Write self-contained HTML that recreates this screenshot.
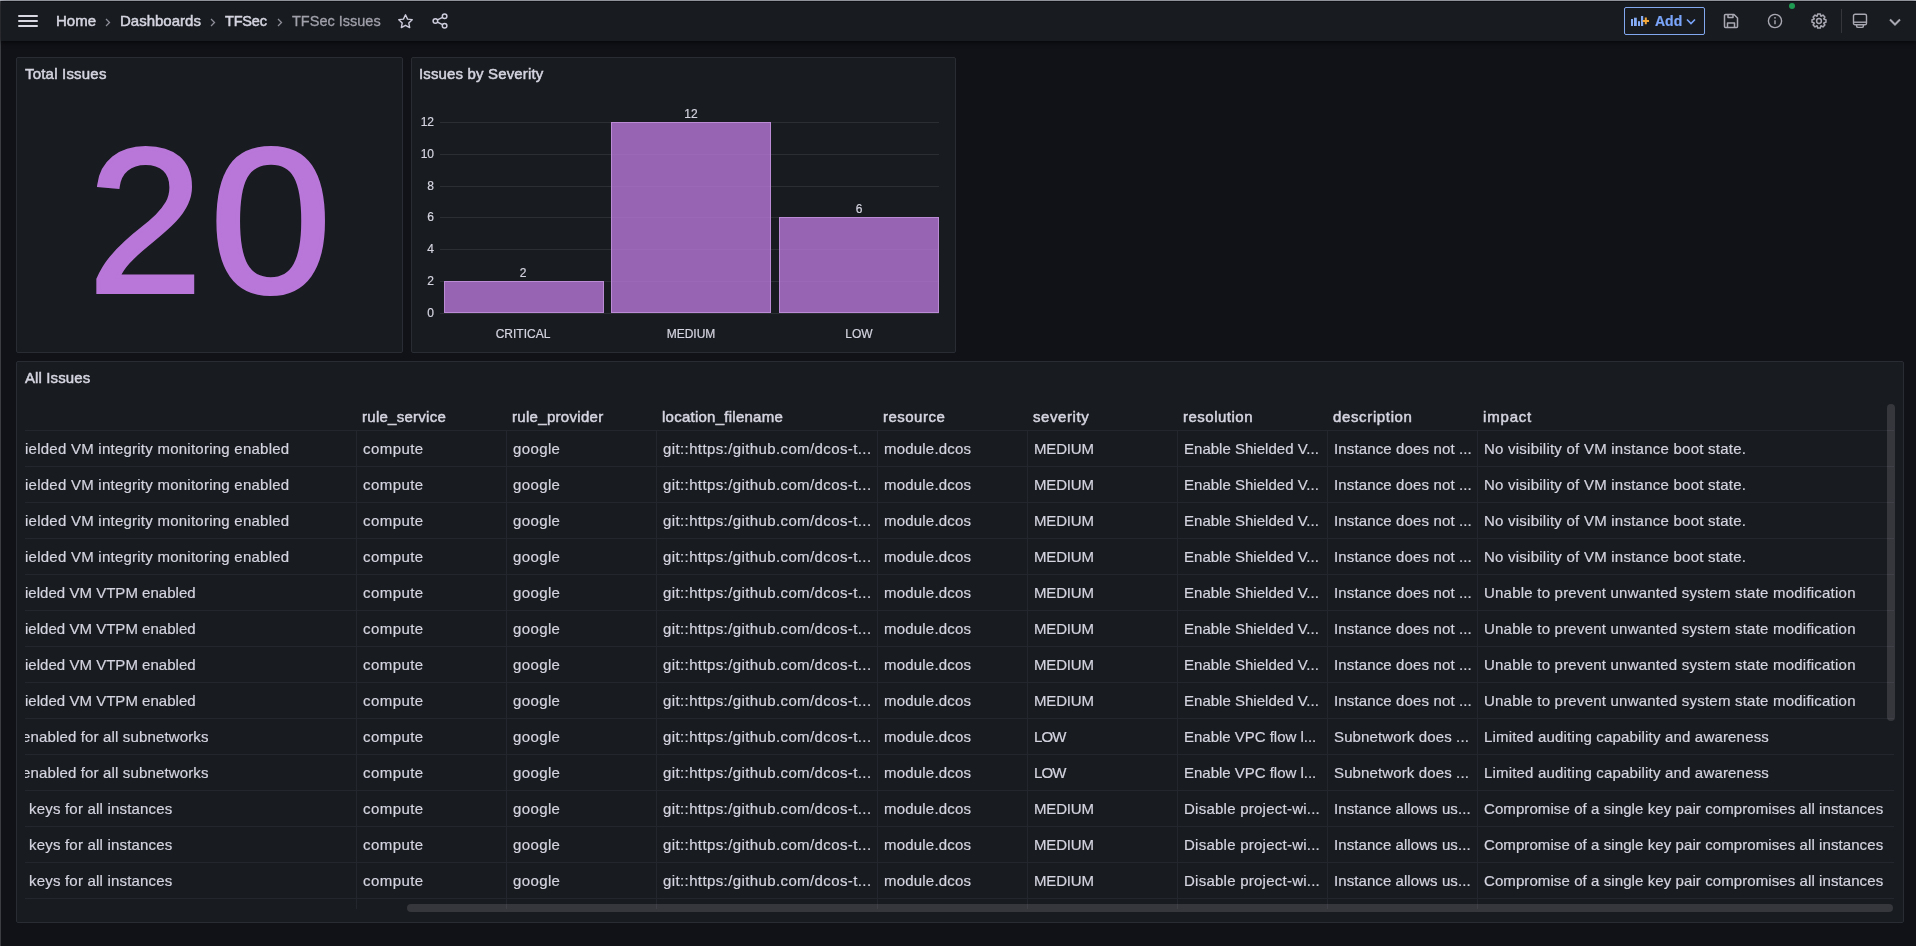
<!DOCTYPE html>
<html><head><meta charset="utf-8">
<style>
#root{position:absolute;left:0;top:0;width:1916px;height:946px;will-change:transform}
*{box-sizing:border-box;margin:0;padding:0}
html,body{width:1916px;height:946px;overflow:hidden;-webkit-font-smoothing:antialiased;background:#111217;font-family:"Liberation Sans",sans-serif;color:#d4d4e0}
.a{position:absolute}
.t{position:absolute;white-space:nowrap;font-size:15px;line-height:18px;-webkit-text-stroke:0.2px currentColor}
.t.m{font-size:15px;-webkit-text-stroke:0.5px currentColor}
.panel{position:absolute;background:#181b1f;border:1px solid #2a2c33;border-radius:2px}
svg{position:absolute;overflow:visible}
</style></head><body><div id="root">

<div class="a" style="left:0;top:0;width:1916px;height:1px;background:#b9bcc6"></div>
<div class="a" style="left:0;top:1px;width:1px;height:945px;background:#3c3d42"></div>
<div class="a" style="left:1px;top:1px;width:1915px;height:40px;background:#181b1f;box-shadow:0 1px 5px rgba(0,0,0,0.75)"></div>
<div class="a" style="left:1px;top:1px;width:1915px;height:1px;background:#0e1016"></div>
<div class="a" style="left:18px;top:15px;width:20px;height:2px;background:#d8d8e2;border-radius:1px"></div>
<div class="a" style="left:18px;top:20px;width:20px;height:2px;background:#d8d8e2;border-radius:1px"></div>
<div class="a" style="left:18px;top:25px;width:20px;height:2px;background:#d8d8e2;border-radius:1px"></div>
<div class="t m" style="left:56px;top:12px;color:#d4d4e0">Home</div>
<div class="t m" style="left:120px;top:12px;color:#d4d4e0">Dashboards</div>
<div class="t m" style="left:225px;top:11.5px;font-size:14.5px;letter-spacing:-0.2px">TFSec</div>
<div class="t" style="left:292px;top:11.5px;color:#a0a0ab;font-size:14.5px;letter-spacing:0px;-webkit-text-stroke:0.3px currentColor">TFSec Issues</div>
<svg style="left:105px;top:18px" width="6" height="9" viewBox="0 0 6 9"><path d="M1 1 L4.5 4.5 L1 8" fill="none" stroke="#8e8e99" stroke-width="1.3"/></svg>
<svg style="left:210px;top:18px" width="6" height="9" viewBox="0 0 6 9"><path d="M1 1 L4.5 4.5 L1 8" fill="none" stroke="#8e8e99" stroke-width="1.3"/></svg>
<svg style="left:277px;top:18px" width="6" height="9" viewBox="0 0 6 9"><path d="M1 1 L4.5 4.5 L1 8" fill="none" stroke="#8e8e99" stroke-width="1.3"/></svg>
<svg style="left:397px;top:13px" width="17" height="17" viewBox="0 0 24 24"><path d="M12 2.5l2.9 6.1 6.6.8-4.9 4.6 1.3 6.5L12 17.3l-5.9 3.2 1.3-6.5-4.9-4.6 6.6-.8z" fill="none" stroke="#ccccdc" stroke-width="2" stroke-linejoin="round"/></svg>
<svg style="left:432px;top:13px" width="16" height="16" viewBox="0 0 16 16"><g fill="none" stroke="#ccccdc" stroke-width="1.5"><circle cx="12.6" cy="3.2" r="2.3"/><circle cx="3.4" cy="8" r="2.3"/><circle cx="12.6" cy="12.8" r="2.3"/><path d="M5.4 6.9 L10.6 4.3 M5.4 9.1 L10.6 11.7"/></g></svg>
<div class="a" style="left:1624px;top:7px;width:81px;height:28px;border:1px solid #82a8f0;border-radius:2px"></div>
<svg style="left:1630px;top:15px" width="20" height="12" viewBox="0 0 20 12"><g fill="#86acf5"><rect x="1" y="4" width="2" height="7"/><rect x="4" y="2.7" width="2.8" height="8.3"/><rect x="8" y="6.2" width="2" height="4.8"/><rect x="11" y="1" width="2.2" height="10"/></g><path d="M15.8 2.6v6.6M12.6 5.9h6.4" stroke="#f5a83a" stroke-width="2"/></svg>
<div class="t" style="left:1655px;top:12px;color:#7aa5fa;font-size:14px;font-weight:bold;letter-spacing:0">Add</div>
<svg style="left:1686px;top:18px" width="10" height="7" viewBox="0 0 10 7"><path d="M1 1.5 L5 5.5 L9 1.5" fill="none" stroke="#7aa5fa" stroke-width="1.6"/></svg>
<svg style="left:1723px;top:13px" width="16" height="16" viewBox="0 0 16 16"><g fill="none" stroke="#a8a8b2" stroke-width="1.5" stroke-linejoin="round"><path d="M2.5 1.5h8.5l3.5 3.5v8.5a1 1 0 0 1-1 1h-11a1 1 0 0 1-1-1v-11a1 1 0 0 1 1-1z"/><path d="M5 1.5v3h5v-3M4.5 14.5v-4.5h7v4.5"/></g></svg>
<svg style="left:1767px;top:13px" width="16" height="16" viewBox="0 0 16 16"><g fill="none" stroke="#a8a8b2" stroke-width="1.4"><circle cx="8" cy="8" r="6.6"/><path d="M8 7.2v4"/></g><circle cx="8" cy="4.8" r="0.9" fill="#a8a8b2"/></svg>
<div class="a" style="left:1789px;top:3px;width:6px;height:6px;border-radius:3px;background:#1f9a52"></div>
<svg style="left:1811px;top:13px" width="16" height="16" viewBox="0 0 16 16"><g fill="none" stroke="#a8a8b2" stroke-width="1.5" stroke-linejoin="round"><path d="M6.23 3.00 L6.66 1.03 L9.34 1.03 L9.77 3.00 L10.28 3.22 L11.98 2.12 L13.88 4.02 L12.78 5.72 L13.00 6.23 L14.97 6.66 L14.97 9.34 L13.00 9.77 L12.78 10.28 L13.88 11.98 L11.98 13.88 L10.28 12.78 L9.77 13.00 L9.34 14.97 L6.66 14.97 L6.23 13.00 L5.72 12.78 L4.02 13.88 L2.12 11.98 L3.22 10.28 L3.00 9.77 L1.03 9.34 L1.03 6.66 L3.00 6.23 L3.22 5.72 L2.12 4.02 L4.02 2.12 L5.72 3.22Z"/><circle cx="8" cy="8" r="2.4"/></g></svg>
<div class="a" style="left:1841px;top:9px;width:1px;height:24px;background:#34363b"></div>
<svg style="left:1852px;top:13px" width="16" height="16" viewBox="0 0 16 16"><g fill="none" stroke="#a8a8b2" stroke-width="1.4" stroke-linejoin="round"><rect x="1.5" y="1.2" width="13" height="10.6" rx="1.6"/><path d="M1.5 9.2h13"/><path d="M4.6 11.8v1.1a1.5 1.5 0 0 0 1.5 1.5h3.8a1.5 1.5 0 0 0 1.5-1.5v-1.1"/></g></svg>
<svg style="left:1889px;top:18px" width="12" height="8" viewBox="0 0 12 8"><path d="M1 1.5 L6 6.5 L11 1.5" fill="none" stroke="#a8a8b2" stroke-width="2"/></svg>
<div class="panel" style="left:16px;top:57px;width:387px;height:296px"></div>
<div class="t m" style="left:25px;top:65px;letter-spacing:0.2px">Total Issues</div>
<div class="a" style="left:88px;top:101px;font-size:206px;line-height:240px;color:#b877d9;-webkit-text-stroke:4px #b877d9;white-space:nowrap">2</div>
<div class="a" style="left:210px;top:101px;font-size:206px;line-height:240px;transform:scaleX(1.06);transform-origin:0 0;color:#b877d9;-webkit-text-stroke:4px #b877d9;white-space:nowrap">0</div>
<div class="panel" style="left:411px;top:57px;width:545px;height:296px"></div>
<div class="t m" style="left:419px;top:65px;letter-spacing:0.15px">Issues by Severity</div>
<div class="a" style="left:440px;top:122px;width:499px;height:1px;background:#2b2e33"></div>
<div class="t" style="left:400px;width:34px;text-align:right;top:115px;font-size:12px;line-height:14px">12</div>
<div class="a" style="left:440px;top:154px;width:499px;height:1px;background:#2b2e33"></div>
<div class="t" style="left:400px;width:34px;text-align:right;top:147px;font-size:12px;line-height:14px">10</div>
<div class="a" style="left:440px;top:186px;width:499px;height:1px;background:#2b2e33"></div>
<div class="t" style="left:400px;width:34px;text-align:right;top:179px;font-size:12px;line-height:14px">8</div>
<div class="a" style="left:440px;top:217px;width:499px;height:1px;background:#2b2e33"></div>
<div class="t" style="left:400px;width:34px;text-align:right;top:210px;font-size:12px;line-height:14px">6</div>
<div class="a" style="left:440px;top:249px;width:499px;height:1px;background:#2b2e33"></div>
<div class="t" style="left:400px;width:34px;text-align:right;top:242px;font-size:12px;line-height:14px">4</div>
<div class="a" style="left:440px;top:281px;width:499px;height:1px;background:#2b2e33"></div>
<div class="t" style="left:400px;width:34px;text-align:right;top:274px;font-size:12px;line-height:14px">2</div>
<div class="a" style="left:440px;top:313px;width:499px;height:1px;background:#2b2e33"></div>
<div class="t" style="left:400px;width:34px;text-align:right;top:306px;font-size:12px;line-height:14px">0</div>
<div class="a" style="left:444px;top:281px;width:160px;height:32px;background:rgba(184,119,217,0.8);border:1px solid #bb8bd6"></div>
<div class="t" style="left:473px;width:100px;text-align:center;top:266px;font-size:12px;line-height:14px">2</div>
<div class="t" style="left:463px;width:120px;text-align:center;top:327px;font-size:12px;line-height:14px">CRITICAL</div>
<div class="a" style="left:611px;top:122px;width:160px;height:191px;background:rgba(184,119,217,0.8);border:1px solid #bb8bd6"></div>
<div class="t" style="left:641px;width:100px;text-align:center;top:107px;font-size:12px;line-height:14px">12</div>
<div class="t" style="left:631px;width:120px;text-align:center;top:327px;font-size:12px;line-height:14px">MEDIUM</div>
<div class="a" style="left:779px;top:217px;width:160px;height:96px;background:rgba(184,119,217,0.8);border:1px solid #bb8bd6"></div>
<div class="t" style="left:809px;width:100px;text-align:center;top:202px;font-size:12px;line-height:14px">6</div>
<div class="t" style="left:799px;width:120px;text-align:center;top:327px;font-size:12px;line-height:14px">LOW</div>
<div class="panel" style="left:16px;top:361px;width:1888px;height:562px"></div>
<div class="t m" style="left:25px;top:369px;letter-spacing:0.12px">All Issues</div>
<div class="t m" style="left:362px;top:408px;letter-spacing:0.27px">rule_service</div>
<div class="t m" style="left:512px;top:408px;letter-spacing:0.31px">rule_provider</div>
<div class="t m" style="left:662px;top:408px;letter-spacing:0.25px">location_filename</div>
<div class="t m" style="left:883px;top:408px;letter-spacing:0.48px">resource</div>
<div class="t m" style="left:1033px;top:408px;letter-spacing:0.57px">severity</div>
<div class="t m" style="left:1183px;top:408px;letter-spacing:0.50px">resolution</div>
<div class="t m" style="left:1333px;top:408px;letter-spacing:0.64px">description</div>
<div class="t m" style="left:1483px;top:408px;letter-spacing:0.82px">impact</div>
<div class="a" style="left:25px;top:430px;width:1869px;height:1px;background:#24262d"></div>
<div class="t" style="left:25px;top:440px;letter-spacing:0.244px;">ielded VM integrity monitoring enabled</div>
<div class="t" style="left:363px;top:440px;letter-spacing:0.433px;">compute</div>
<div class="t" style="left:513px;top:440px;letter-spacing:0.380px;">google</div>
<div class="t" style="left:663px;top:440px;letter-spacing:0.391px;">git::https:/github.com/dcos-t...</div>
<div class="t" style="left:884px;top:440px;letter-spacing:0.200px;">module.dcos</div>
<div class="t" style="left:1034px;top:440px;letter-spacing:-0.180px;">MEDIUM</div>
<div class="t" style="left:1184px;top:440px;letter-spacing:0.016px;">Enable Shielded V...</div>
<div class="t" style="left:1334px;top:440px;letter-spacing:0.135px;">Instance does not ...</div>
<div class="t" style="left:1484px;top:440px;letter-spacing:0.238px;">No visibility of VM instance boot state.</div>
<div class="a" style="left:25px;top:466px;width:1869px;height:1px;background:#24262d"></div>
<div class="t" style="left:25px;top:476px;letter-spacing:0.244px;">ielded VM integrity monitoring enabled</div>
<div class="t" style="left:363px;top:476px;letter-spacing:0.433px;">compute</div>
<div class="t" style="left:513px;top:476px;letter-spacing:0.380px;">google</div>
<div class="t" style="left:663px;top:476px;letter-spacing:0.391px;">git::https:/github.com/dcos-t...</div>
<div class="t" style="left:884px;top:476px;letter-spacing:0.200px;">module.dcos</div>
<div class="t" style="left:1034px;top:476px;letter-spacing:-0.180px;">MEDIUM</div>
<div class="t" style="left:1184px;top:476px;letter-spacing:0.016px;">Enable Shielded V...</div>
<div class="t" style="left:1334px;top:476px;letter-spacing:0.135px;">Instance does not ...</div>
<div class="t" style="left:1484px;top:476px;letter-spacing:0.238px;">No visibility of VM instance boot state.</div>
<div class="a" style="left:25px;top:502px;width:1869px;height:1px;background:#24262d"></div>
<div class="t" style="left:25px;top:512px;letter-spacing:0.244px;">ielded VM integrity monitoring enabled</div>
<div class="t" style="left:363px;top:512px;letter-spacing:0.433px;">compute</div>
<div class="t" style="left:513px;top:512px;letter-spacing:0.380px;">google</div>
<div class="t" style="left:663px;top:512px;letter-spacing:0.391px;">git::https:/github.com/dcos-t...</div>
<div class="t" style="left:884px;top:512px;letter-spacing:0.200px;">module.dcos</div>
<div class="t" style="left:1034px;top:512px;letter-spacing:-0.180px;">MEDIUM</div>
<div class="t" style="left:1184px;top:512px;letter-spacing:0.016px;">Enable Shielded V...</div>
<div class="t" style="left:1334px;top:512px;letter-spacing:0.135px;">Instance does not ...</div>
<div class="t" style="left:1484px;top:512px;letter-spacing:0.238px;">No visibility of VM instance boot state.</div>
<div class="a" style="left:25px;top:538px;width:1869px;height:1px;background:#24262d"></div>
<div class="t" style="left:25px;top:548px;letter-spacing:0.244px;">ielded VM integrity monitoring enabled</div>
<div class="t" style="left:363px;top:548px;letter-spacing:0.433px;">compute</div>
<div class="t" style="left:513px;top:548px;letter-spacing:0.380px;">google</div>
<div class="t" style="left:663px;top:548px;letter-spacing:0.391px;">git::https:/github.com/dcos-t...</div>
<div class="t" style="left:884px;top:548px;letter-spacing:0.200px;">module.dcos</div>
<div class="t" style="left:1034px;top:548px;letter-spacing:-0.180px;">MEDIUM</div>
<div class="t" style="left:1184px;top:548px;letter-spacing:0.016px;">Enable Shielded V...</div>
<div class="t" style="left:1334px;top:548px;letter-spacing:0.135px;">Instance does not ...</div>
<div class="t" style="left:1484px;top:548px;letter-spacing:0.238px;">No visibility of VM instance boot state.</div>
<div class="a" style="left:25px;top:574px;width:1869px;height:1px;background:#24262d"></div>
<div class="t" style="left:25px;top:584px;letter-spacing:0.028px;">ielded VM VTPM enabled</div>
<div class="t" style="left:363px;top:584px;letter-spacing:0.433px;">compute</div>
<div class="t" style="left:513px;top:584px;letter-spacing:0.380px;">google</div>
<div class="t" style="left:663px;top:584px;letter-spacing:0.391px;">git::https:/github.com/dcos-t...</div>
<div class="t" style="left:884px;top:584px;letter-spacing:0.200px;">module.dcos</div>
<div class="t" style="left:1034px;top:584px;letter-spacing:-0.180px;">MEDIUM</div>
<div class="t" style="left:1184px;top:584px;letter-spacing:0.016px;">Enable Shielded V...</div>
<div class="t" style="left:1334px;top:584px;letter-spacing:0.135px;">Instance does not ...</div>
<div class="t" style="left:1484px;top:584px;letter-spacing:0.221px;">Unable to prevent unwanted system state modification</div>
<div class="a" style="left:25px;top:610px;width:1869px;height:1px;background:#24262d"></div>
<div class="t" style="left:25px;top:620px;letter-spacing:0.028px;">ielded VM VTPM enabled</div>
<div class="t" style="left:363px;top:620px;letter-spacing:0.433px;">compute</div>
<div class="t" style="left:513px;top:620px;letter-spacing:0.380px;">google</div>
<div class="t" style="left:663px;top:620px;letter-spacing:0.391px;">git::https:/github.com/dcos-t...</div>
<div class="t" style="left:884px;top:620px;letter-spacing:0.200px;">module.dcos</div>
<div class="t" style="left:1034px;top:620px;letter-spacing:-0.180px;">MEDIUM</div>
<div class="t" style="left:1184px;top:620px;letter-spacing:0.016px;">Enable Shielded V...</div>
<div class="t" style="left:1334px;top:620px;letter-spacing:0.135px;">Instance does not ...</div>
<div class="t" style="left:1484px;top:620px;letter-spacing:0.221px;">Unable to prevent unwanted system state modification</div>
<div class="a" style="left:25px;top:646px;width:1869px;height:1px;background:#24262d"></div>
<div class="t" style="left:25px;top:656px;letter-spacing:0.028px;">ielded VM VTPM enabled</div>
<div class="t" style="left:363px;top:656px;letter-spacing:0.433px;">compute</div>
<div class="t" style="left:513px;top:656px;letter-spacing:0.380px;">google</div>
<div class="t" style="left:663px;top:656px;letter-spacing:0.391px;">git::https:/github.com/dcos-t...</div>
<div class="t" style="left:884px;top:656px;letter-spacing:0.200px;">module.dcos</div>
<div class="t" style="left:1034px;top:656px;letter-spacing:-0.180px;">MEDIUM</div>
<div class="t" style="left:1184px;top:656px;letter-spacing:0.016px;">Enable Shielded V...</div>
<div class="t" style="left:1334px;top:656px;letter-spacing:0.135px;">Instance does not ...</div>
<div class="t" style="left:1484px;top:656px;letter-spacing:0.221px;">Unable to prevent unwanted system state modification</div>
<div class="a" style="left:25px;top:682px;width:1869px;height:1px;background:#24262d"></div>
<div class="t" style="left:25px;top:692px;letter-spacing:0.028px;">ielded VM VTPM enabled</div>
<div class="t" style="left:363px;top:692px;letter-spacing:0.433px;">compute</div>
<div class="t" style="left:513px;top:692px;letter-spacing:0.380px;">google</div>
<div class="t" style="left:663px;top:692px;letter-spacing:0.391px;">git::https:/github.com/dcos-t...</div>
<div class="t" style="left:884px;top:692px;letter-spacing:0.200px;">module.dcos</div>
<div class="t" style="left:1034px;top:692px;letter-spacing:-0.180px;">MEDIUM</div>
<div class="t" style="left:1184px;top:692px;letter-spacing:0.016px;">Enable Shielded V...</div>
<div class="t" style="left:1334px;top:692px;letter-spacing:0.135px;">Instance does not ...</div>
<div class="t" style="left:1484px;top:692px;letter-spacing:0.221px;">Unable to prevent unwanted system state modification</div>
<div class="a" style="left:25px;top:718px;width:1869px;height:1px;background:#24262d"></div>
<div class="a" style="left:25px;top:728px;width:320px;height:20px;overflow:hidden"><div class="t" style="left:-3px;top:0;letter-spacing:0.15px">enabled for all subnetworks</div></div>
<div class="t" style="left:363px;top:728px;letter-spacing:0.433px;">compute</div>
<div class="t" style="left:513px;top:728px;letter-spacing:0.380px;">google</div>
<div class="t" style="left:663px;top:728px;letter-spacing:0.391px;">git::https:/github.com/dcos-t...</div>
<div class="t" style="left:884px;top:728px;letter-spacing:0.200px;">module.dcos</div>
<div class="t" style="left:1034px;top:728px;letter-spacing:-0.850px;">LOW</div>
<div class="t" style="left:1184px;top:728px;letter-spacing:-0.015px;">Enable VPC flow l...</div>
<div class="t" style="left:1334px;top:728px;letter-spacing:0.127px;">Subnetwork does ...</div>
<div class="t" style="left:1484px;top:728px;letter-spacing:0.179px;">Limited auditing capability and awareness</div>
<div class="a" style="left:25px;top:754px;width:1869px;height:1px;background:#24262d"></div>
<div class="a" style="left:25px;top:764px;width:320px;height:20px;overflow:hidden"><div class="t" style="left:-3px;top:0;letter-spacing:0.15px">enabled for all subnetworks</div></div>
<div class="t" style="left:363px;top:764px;letter-spacing:0.433px;">compute</div>
<div class="t" style="left:513px;top:764px;letter-spacing:0.380px;">google</div>
<div class="t" style="left:663px;top:764px;letter-spacing:0.391px;">git::https:/github.com/dcos-t...</div>
<div class="t" style="left:884px;top:764px;letter-spacing:0.200px;">module.dcos</div>
<div class="t" style="left:1034px;top:764px;letter-spacing:-0.850px;">LOW</div>
<div class="t" style="left:1184px;top:764px;letter-spacing:-0.015px;">Enable VPC flow l...</div>
<div class="t" style="left:1334px;top:764px;letter-spacing:0.127px;">Subnetwork does ...</div>
<div class="t" style="left:1484px;top:764px;letter-spacing:0.179px;">Limited auditing capability and awareness</div>
<div class="a" style="left:25px;top:790px;width:1869px;height:1px;background:#24262d"></div>
<div class="t" style="left:29px;top:800px;letter-spacing:0.195px;">keys for all instances</div>
<div class="t" style="left:363px;top:800px;letter-spacing:0.433px;">compute</div>
<div class="t" style="left:513px;top:800px;letter-spacing:0.380px;">google</div>
<div class="t" style="left:663px;top:800px;letter-spacing:0.391px;">git::https:/github.com/dcos-t...</div>
<div class="t" style="left:884px;top:800px;letter-spacing:0.200px;">module.dcos</div>
<div class="t" style="left:1034px;top:800px;letter-spacing:-0.180px;">MEDIUM</div>
<div class="t" style="left:1184px;top:800px;letter-spacing:0.245px;">Disable project-wi...</div>
<div class="t" style="left:1334px;top:800px;letter-spacing:0.075px;">Instance allows us...</div>
<div class="t" style="left:1484px;top:800px;letter-spacing:0.086px;">Compromise of a single key pair compromises all instances</div>
<div class="a" style="left:25px;top:826px;width:1869px;height:1px;background:#24262d"></div>
<div class="t" style="left:29px;top:836px;letter-spacing:0.195px;">keys for all instances</div>
<div class="t" style="left:363px;top:836px;letter-spacing:0.433px;">compute</div>
<div class="t" style="left:513px;top:836px;letter-spacing:0.380px;">google</div>
<div class="t" style="left:663px;top:836px;letter-spacing:0.391px;">git::https:/github.com/dcos-t...</div>
<div class="t" style="left:884px;top:836px;letter-spacing:0.200px;">module.dcos</div>
<div class="t" style="left:1034px;top:836px;letter-spacing:-0.180px;">MEDIUM</div>
<div class="t" style="left:1184px;top:836px;letter-spacing:0.245px;">Disable project-wi...</div>
<div class="t" style="left:1334px;top:836px;letter-spacing:0.075px;">Instance allows us...</div>
<div class="t" style="left:1484px;top:836px;letter-spacing:0.086px;">Compromise of a single key pair compromises all instances</div>
<div class="a" style="left:25px;top:862px;width:1869px;height:1px;background:#24262d"></div>
<div class="t" style="left:29px;top:872px;letter-spacing:0.195px;">keys for all instances</div>
<div class="t" style="left:363px;top:872px;letter-spacing:0.433px;">compute</div>
<div class="t" style="left:513px;top:872px;letter-spacing:0.380px;">google</div>
<div class="t" style="left:663px;top:872px;letter-spacing:0.391px;">git::https:/github.com/dcos-t...</div>
<div class="t" style="left:884px;top:872px;letter-spacing:0.200px;">module.dcos</div>
<div class="t" style="left:1034px;top:872px;letter-spacing:-0.180px;">MEDIUM</div>
<div class="t" style="left:1184px;top:872px;letter-spacing:0.245px;">Disable project-wi...</div>
<div class="t" style="left:1334px;top:872px;letter-spacing:0.075px;">Instance allows us...</div>
<div class="t" style="left:1484px;top:872px;letter-spacing:0.086px;">Compromise of a single key pair compromises all instances</div>
<div class="a" style="left:25px;top:898px;width:1869px;height:1px;background:#24262d"></div>
<div class="a" style="left:356px;top:431px;width:1px;height:478px;background:#24262d"></div>
<div class="a" style="left:506px;top:431px;width:1px;height:478px;background:#24262d"></div>
<div class="a" style="left:656px;top:431px;width:1px;height:478px;background:#24262d"></div>
<div class="a" style="left:877px;top:431px;width:1px;height:478px;background:#24262d"></div>
<div class="a" style="left:1027px;top:431px;width:1px;height:478px;background:#24262d"></div>
<div class="a" style="left:1177px;top:431px;width:1px;height:478px;background:#24262d"></div>
<div class="a" style="left:1327px;top:431px;width:1px;height:478px;background:#24262d"></div>
<div class="a" style="left:1477px;top:431px;width:1px;height:478px;background:#24262d"></div>
<div class="a" style="left:407px;top:904px;width:1486px;height:8px;border-radius:4px;background:rgba(204,204,220,0.16)"></div>
<div class="a" style="left:1887px;top:404px;width:8px;height:317px;border-radius:4px;background:rgba(204,204,220,0.16)"></div>
</div></body></html>
